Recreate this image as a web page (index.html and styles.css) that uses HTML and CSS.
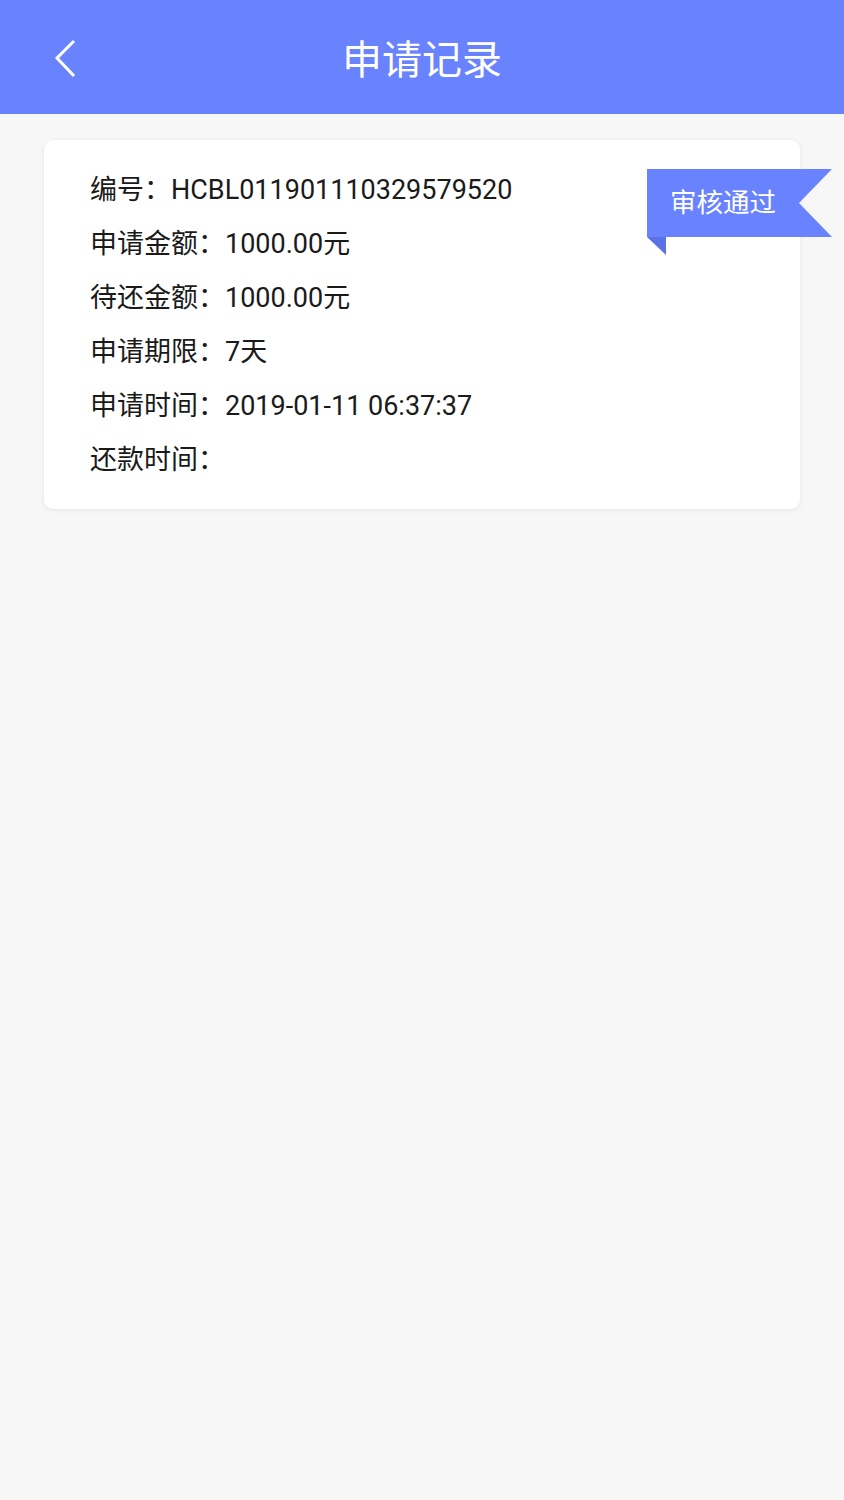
FILE: index.html
```html
<!DOCTYPE html>
<html lang="zh-CN">
<head>
<meta charset="utf-8">
<title>申请记录</title>
<link rel="stylesheet" href="styles.css">
</head>
<body>
<header class="topbar">
  <span class="back">
    <svg width="24" height="40" viewBox="0 0 24 40"><polyline points="20,3 3,20 20,38" fill="none" stroke="#fff" stroke-width="3" stroke-linejoin="miter"/></svg>
  </span>
  <h1 class="title">申请记录</h1>
</header>
<main class="content">
  <section class="card">
    <div class="badge"><span class="badge-text">审核通过</span></div>
    <div class="badge-fold"></div>
    <div class="row">编号：HCBL011901110329579520</div>
    <div class="row">申请金额：1000.00元</div>
    <div class="row">待还金额：1000.00元</div>
    <div class="row">申请期限：7天</div>
    <div class="row">申请时间：2019-01-11 06:37:37</div>
    <div class="row">还款时间：</div>
  </section>
</main>
</body>
</html>
```
FILE: styles.css
```css
html, body {
  margin: 0;
  padding: 0;
}
body {
  background: #f7f7f7;
  font-family: Roboto, "Noto Sans CJK SC", sans-serif;
  width: 844px;
  min-height: 1500px;
}
.topbar {
  height: 114px;
  background: #6983ff;
  display: flex;
  align-items: center;
  justify-content: center;
  position: relative;
}
.back {
  position: absolute;
  left: 54px;
  top: 38px;
  width: 24px;
  height: 40px;
  display: block;
}
.back svg { display: block; }
.title {
  margin: 0;
  color: #fff;
  font-family: "Noto Sans CJK SC", sans-serif;
  font-weight: 400;
  font-size: 40px;
  line-height: 1;
  letter-spacing: 0;
}
.content {
  padding: 26px 44px 0 44px;
}
.card {
  position: relative;
  background: #fff;
  border-radius: 9px;
  box-shadow: 0 1px 5px rgba(0,0,0,0.08);
  padding: 23px 46px 22px 46px;
}
.row {
  height: 54px;
  line-height: 54px;
  font-size: 27px;
  color: #1a1a1a;
  white-space: nowrap;
}
.badge {
  position: absolute;
  left: 603px;
  top: 29px;
  width: 185px;
  height: 68px;
  background: #6983ff;
  clip-path: polygon(0 0, 185px 0, 152px 34px, 185px 68px, 0 68px);
  display: flex;
  align-items: center;
  padding-left: 23px;
  padding-bottom: 4px;
  box-sizing: border-box;
}
.badge-text {
  color: #fff;
  font-family: "Noto Sans CJK SC", sans-serif;
  font-size: 26.5px;
  line-height: 1;
}
.badge-fold {
  position: absolute;
  left: 603px;
  top: 97px;
  width: 19px;
  height: 18px;
  background: #5a72e6;
  clip-path: polygon(0 0, 19px 0, 19px 18px);
}
```
